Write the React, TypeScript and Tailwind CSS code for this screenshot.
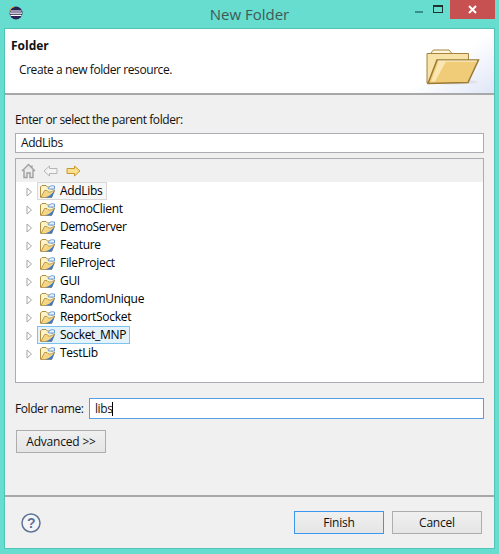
function Folder() {
  return (
    <svg width="17" height="15" viewBox="0 0 17 15" className="shrink-0">
      <path d="M1.5 13.5V3L3 1.5H7L8.5 3H13V6" fill="#fdf3c8" stroke="#b08c3c" />
      <path d="M9 4.5C11 1.5 13 1.5 15.5 2V5H10Z" fill="#e8f1fb" stroke="#5f91d2" strokeWidth="0.9" />
      <path d="M2 13.5L5.5 6.5H8C10 9.5 12.5 7.5 15.8 6L12.5 13.5Z" fill="#f6d683" stroke="#a88a3e" strokeWidth="0.8" />
      <path d="M6 13.5C10 12.5 12 11 15.8 6L13 13.5Z" fill="#3f78c8" />
    </svg>
  );
}

function Row({ name, state }: { name: string; state?: "hover" | "selected" }) {
  const cls =
    state === "hover"
      ? "border-[#d9d9d9] bg-[#f7f7f7]"
      : state === "selected"
        ? "border-[#7ec3ee] bg-[#e3f2fb]"
        : "border-transparent";
  return (
    <div className="flex h-[18px] items-center pl-[10px]">
      <svg width="7" height="10" viewBox="0 0 7 10" className="mt-[2px] shrink-0">
        <path d="M1 1L5.5 5L1 9Z" fill="#fff" stroke="#a6a6a6" />
      </svg>
      <div className={`ml-[4px] flex h-[18px] items-center border pl-[1px] pr-[3px] ${cls}`}>
        <Folder />
        <span className="ml-[4px] text-[12px] leading-none tracking-[-0.3px] text-[#000]">{name}</span>
      </div>
    </div>
  );
}

function Btn({ label, primary, w }: { label: string; primary?: boolean; w: string }) {
  return (
    <div
      className={`flex h-[23px] items-center justify-center border bg-gradient-to-b from-[#f0f0f0] to-[#e5e5e5] text-[12px] tracking-[-0.2px] text-[#111] ${w} ${
        primary ? "border-[#3d97ee]" : "border-[#adadad]"
      }`}
    >
      {label}
    </div>
  );
}

export default function App() {
  return (
    <div
      className="flex h-[554px] w-[499px] flex-col overflow-hidden bg-[#66ddcf] pl-[4px] pr-[4px] pb-[5px] text-[#111]"
      style={{ fontFamily: '"Open Sans", "Noto Sans", sans-serif', letterSpacing: "-0.42px" }}
    >
      <div className="relative flex h-[28px] shrink-0 items-center justify-center text-[15px] tracking-normal text-[#3f5a56]">
        <svg width="14" height="14" viewBox="0 0 14 14" className="absolute left-[5px] top-[6px]">
          <circle cx="7" cy="7" r="6.5" fill="#2c2255" />
          <path d="M0.5 7A6.5 6.5 0 0 1 5 .8" fill="none" stroke="#f7941e" strokeWidth="1" />
          <path d="M1.5 5h11M1 7.2h12M1.5 9.4h11" stroke="#fff" strokeWidth="1.2" />
        </svg>
        <span>New Folder</span>
        <div className="absolute right-0 top-0 flex h-[19px] items-stretch">
          <div className="flex w-[28px] items-center justify-center">
            <div className="mt-[5px] h-[2px] w-[8px] bg-[#3a8f86]" />
          </div>
          <div className="flex w-[17px] items-start justify-start pt-[5px]">
            <div className="h-[8px] w-[10px] border border-t-[2px] border-[#1d3330]" />
          </div>
          <div className="flex w-[45px] items-center justify-center bg-[#c75050]">
            <svg width="9" height="9" viewBox="0 0 9 9">
              <path d="M1 1L8 8M8 1L1 8" stroke="#fff" strokeWidth="2" />
            </svg>
          </div>
        </div>
      </div>

      <div className="flex min-h-0 flex-1 flex-col border border-[#52c4b7] bg-[#f0f0f0]">
        <div className="relative flex h-[66px] shrink-0 flex-col overflow-hidden border-b-2 border-[#a8a8a8] bg-white pl-[6px] pt-[8px]">
          <div className="text-[12px] font-bold leading-[18px] tracking-normal text-[#111]">Folder</div>
          <div className="ml-[8px] mt-[7px] text-[12px] leading-[16px]">Create a new folder resource.</div>
          <div className="absolute right-0 top-0 h-full w-[90px] bg-gradient-to-br from-white from-50% to-[#dfe6f6]" />
          <svg width="54" height="40" viewBox="0 0 54 40" className="absolute right-[14px] top-[17px]">
            <ellipse cx="26" cy="36" rx="26" ry="2.5" fill="#dfe2ea" />
            <path d="M4.5 12V7.5L7.5 4H23L26 7.5V12Z" fill="#fdf6dc" stroke="#a5833d" />
            <path d="M1 37V7.5H42.5V36Z" fill="#f7e3a8" stroke="#a5833d" />
            <path d="M2 37.5L11 14H52.5L42 36.5Z" fill="#f1cc78" stroke="#9a7a34" strokeWidth="1.5" />
            <path d="M5 35.5L12.5 15.5H20L9 35.5Z" fill="#f9e6b0" />
            <path d="M12 15H51" stroke="#fdf6dc" strokeWidth="1" />
          </svg>
        </div>

        <div className="flex flex-1 flex-col px-[10px] pt-[17px]">
          <div className="h-[16px] text-[12px] leading-[16px]">Enter or select the parent folder:</div>
          <div className="mt-[5px] flex h-[20px] items-center border border-[#abadb3] bg-white pl-[5px] text-[12px]">AddLibs</div>

          <div className="mt-[5px] h-[225px] border border-[#abadb3] bg-white">
            <div className="flex h-[23px] items-center bg-[#f0f0f0] pl-[5px]">
              <svg width="15" height="16" viewBox="0 0 15 16">
                <path d="M1 8L7.5 1.5L14 8M3 7V14.5H6V10H9V14.5H12V7M11 2.5V5" fill="#e8e8e8" stroke="#a0a0a0" strokeWidth="1.4" />
              </svg>
              <svg width="15" height="12" viewBox="0 0 15 12" className="ml-[7px]">
                <path d="M1 6L6.5 1V3.5H14V8.5H6.5V11Z" fill="#f4f4f4" stroke="#b5b5b5" />
              </svg>
              <svg width="15" height="12" viewBox="0 0 15 12" className="ml-[8px]">
                <path d="M14 6L8.5 1V3.5H1V8.5H8.5V11Z" fill="#f9df8e" stroke="#c89a2e" />
              </svg>
            </div>
            <div>
              <Row name="AddLibs" state="hover" />
              <Row name="DemoClient" />
              <Row name="DemoServer" />
              <Row name="Feature" />
              <Row name="FileProject" />
              <Row name="GUI" />
              <Row name="RandomUnique" />
              <Row name="ReportSocket" />
              <Row name="Socket_MNP" state="selected" />
              <Row name="TestLib" />
            </div>
          </div>

          <div className="mt-[15px] flex h-[21px] items-center">
            <span className="w-[74px] text-[12px]">Folder name:</span>
            <div className="flex h-[21px] flex-1 items-center border border-[#569de5] bg-white pl-[5px] text-[12px]">
              libs<span className="h-[14px] w-px bg-black" />
            </div>
          </div>

          <div className="ml-px mt-[11px]">
            <Btn label="Advanced >>" w="w-[90px]" />
          </div>
        </div>

        <div className="flex h-[53px] shrink-0 items-start justify-between border-t-2 border-[#a8a8a8] pl-[16px] pr-[12px] pt-[14px]">
          <svg width="20" height="22" viewBox="0 0 20 20" className="mt-[1px]">
            <circle cx="10" cy="10" r="9" fill="#f4f5f8" stroke="#5f7394" strokeWidth="1.5" />
            <text x="10" y="15" textAnchor="middle" fontSize="14" fontWeight="700" fill="#5f7394" fontFamily="Liberation Sans">?</text>
          </svg>
          <div className="flex gap-[8px]">
            <Btn label="Finish" primary w="w-[90px]" />
            <Btn label="Cancel" w="w-[90px]" />
          </div>
        </div>
      </div>
    </div>
  );
}
